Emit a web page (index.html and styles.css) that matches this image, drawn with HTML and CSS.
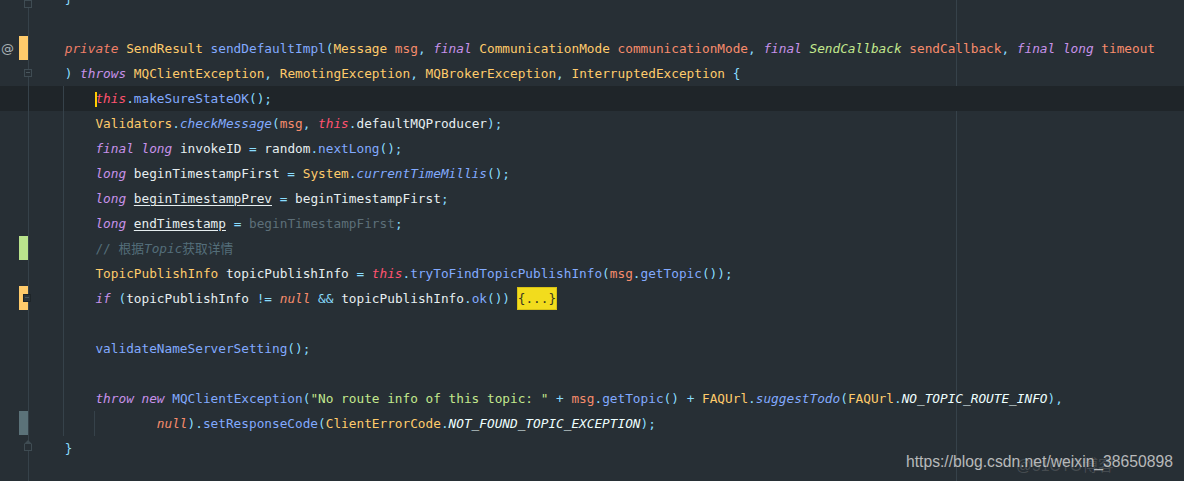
FILE: index.html
```html
<!DOCTYPE html>
<html>
<head>
<meta charset="utf-8">
<link rel="stylesheet" href="styles.css">
</head>
<body>
<div class="editor">
  <div class="line"><div class="gut"><span class="ico"></span><span class="mark"></span><span class="fold"></span></div><div class="code">    <span class="o">}</span></div></div>
  <div class="line"><div class="gut"><span class="ico"></span><span class="mark"></span></div><div class="code"></div></div>
  <div class="line"><div class="gut"><span class="ico">@</span><span class="mark yel"></span></div><div class="code">    <span class="pr">private</span> <span class="c">SendResult</span> <span class="m">sendDefaultImpl</span><span class="o">(</span><span class="c">Message</span> <span class="p">msg</span><span class="o">,</span> <span class="k">final</span> <span class="c">CommunicationMode</span> <span class="p">communicationMode</span><span class="o">,</span> <span class="k">final</span> <span class="sc">SendCallback</span> <span class="p">sendCallback</span><span class="o">,</span> <span class="k">final</span> <span class="k">long</span> <span class="p">timeout</span></div></div>
  <div class="line"><div class="gut"><span class="ico"></span><span class="mark"></span><span class="fold minus"></span></div><div class="code">    <span class="o">)</span> <span class="k">throws</span> <span class="c">MQClientException</span><span class="o">,</span> <span class="c">RemotingException</span><span class="o">,</span> <span class="c">MQBrokerException</span><span class="o">,</span> <span class="c">InterruptedException</span> <span class="o">{</span></div></div>
  <div class="line cur g1"><div class="gut"><span class="ico"></span><span class="mark"></span></div><div class="code">        <span class="caret"></span><span class="t">this</span><span class="o">.</span><span class="m">makeSureStateOK</span><span class="o">();</span></div></div>
  <div class="line g1"><div class="gut"><span class="ico"></span><span class="mark"></span></div><div class="code">        <span class="c">Validators</span><span class="o">.</span><span class="mi">checkMessage</span><span class="o">(</span><span class="p">msg</span><span class="o">,</span> <span class="t">this</span><span class="o">.</span>defaultMQProducer<span class="o">);</span></div></div>
  <div class="line g1"><div class="gut"><span class="ico"></span><span class="mark"></span></div><div class="code">        <span class="k">final</span> <span class="k">long</span> invokeID <span class="o">=</span> random<span class="o">.</span><span class="m">nextLong</span><span class="o">();</span></div></div>
  <div class="line g1"><div class="gut"><span class="ico"></span><span class="mark"></span></div><div class="code">        <span class="k">long</span> beginTimestampFirst <span class="o">=</span> <span class="c">System</span><span class="o">.</span><span class="mi">currentTimeMillis</span><span class="o">();</span></div></div>
  <div class="line g1"><div class="gut"><span class="ico"></span><span class="mark"></span></div><div class="code">        <span class="k">long</span> <span class="u">beginTimestampPrev</span> <span class="o">=</span> beginTimestampFirst<span class="o">;</span></div></div>
  <div class="line g1"><div class="gut"><span class="ico"></span><span class="mark"></span></div><div class="code">        <span class="k">long</span> <span class="u">endTimestamp</span> <span class="o">=</span> <span class="gr">beginTimestampFirst</span><span class="o">;</span></div></div>
  <div class="line g1"><div class="gut"><span class="ico"></span><span class="mark grn"></span></div><div class="code">        <span class="cm">// 根据<i>Topic</i>获取详情</span></div></div>
  <div class="line g1"><div class="gut"><span class="ico"></span><span class="mark"></span></div><div class="code">        <span class="c">TopicPublishInfo</span> topicPublishInfo <span class="o">=</span> <span class="t">this</span><span class="o">.</span><span class="m">tryToFindTopicPublishInfo</span><span class="o">(</span><span class="p">msg</span><span class="o">.</span><span class="m">getTopic</span><span class="o">());</span></div></div>
  <div class="line g1"><div class="gut"><span class="ico"></span><span class="mark yel"></span><span class="fold plus"></span></div><div class="code">        <span class="k">if</span> <span class="o">(</span>topicPublishInfo <span class="o">!=</span> <span class="n">null</span> <span class="o">&amp;&amp;</span> topicPublishInfo<span class="o">.</span><span class="m">ok</span><span class="o">())</span> <span class="folded">{...}</span></div></div>
  <div class="line g1"><div class="gut"><span class="ico"></span><span class="mark"></span></div><div class="code"></div></div>
  <div class="line g1"><div class="gut"><span class="ico"></span><span class="mark"></span></div><div class="code">        <span class="m">validateNameServerSetting</span><span class="o">();</span></div></div>
  <div class="line g1"><div class="gut"><span class="ico"></span><span class="mark"></span></div><div class="code"></div></div>
  <div class="line g1"><div class="gut"><span class="ico"></span><span class="mark"></span></div><div class="code">        <span class="k">throw</span> <span class="k">new</span> <span class="m">MQClientException</span><span class="o">(</span><span class="s">"No route info of this topic: "</span> <span class="o">+</span> <span class="p">msg</span><span class="o">.</span><span class="m">getTopic</span><span class="o">()</span> <span class="o">+</span> <span class="c">FAQUrl</span><span class="o">.</span><span class="mi">suggestTodo</span><span class="o">(</span><span class="c">FAQUrl</span><span class="o">.</span><span class="st">NO_TOPIC_ROUTE_INFO</span><span class="o">),</span></div></div>
  <div class="line g1 g2"><div class="gut"><span class="ico"></span><span class="mark gry"></span></div><div class="code">                <span class="n">null</span><span class="o">).</span><span class="m">setResponseCode</span><span class="o">(</span><span class="c">ClientErrorCode</span><span class="o">.</span><span class="st">NOT_FOUND_TOPIC_EXCEPTION</span><span class="o">);</span></div></div>
  <div class="line"><div class="gut"><span class="ico"></span><span class="mark"></span><span class="fold end"></span></div><div class="code">    <span class="o">}</span></div></div>
  <div class="line"><div class="gut"><span class="ico"></span><span class="mark"></span></div><div class="code"></div></div>
</div>
<div class="wm"><span class="wm2">@51CTO博客</span>https://blog.csdn.net/weixin_38650898</div>
</body>
</html>
```

FILE: styles.css
```css
html, body {
  margin: 0;
  padding: 0;
  background: #272f35;
  width: 1184px;
  height: 481px;
  overflow: hidden;
}
.editor {
  margin-top: -14px;
  display: flex;
  flex-direction: column;
  font-family: "DejaVu Sans Mono", "Liberation Mono", "Noto Sans CJK SC", monospace;
  font-size: 12.75px;
  color: #e6eef0;
  background-image: linear-gradient(#36424a, #36424a);
  background-repeat: no-repeat;
  background-position: 956px 0;
  background-size: 1px 100%;
}
.line {
  display: flex;
  height: 25px;
  line-height: 25px;
}
.line.cur {
  background-color: #1f2529;
}
.gut {
  position: relative;
  width: 34px;
  flex: none;
  display: flex;
  align-items: stretch;
  background-image: linear-gradient(#36424a, #36424a);
  background-repeat: no-repeat;
  background-position: 28px 0;
  background-size: 1px 100%;
}
.ico {
  width: 19px;
  flex: none;
  color: #a9b2b6;
  font-family: "DejaVu Sans", sans-serif;
  font-size: 13px;
  text-align: left;
  padding-left: 1px;
  box-sizing: border-box;
}
.mark {
  width: 9px;
  flex: none;
  margin: 0 0 1px 0;
}
.mark.yel { background: #ffcb6b; }
.mark.grn { background: #b9e38c; }
.mark.gry { background: #5b7279; }
.fold {
  position: absolute;
  left: 24px;
  width: 8px;
  height: 8px;
  border: 1px solid #3f4c53;
  background: #272f35;
  box-sizing: border-box;
}
.fold.minus { top: 8px; }
.fold.minus::after, .fold.plus::after {
  content: "";
  position: absolute;
  left: 1px;
  right: 1px;
  top: 2px;
  height: 1px;
  background: #4a575e;
}
.fold.plus { top: 8px; left: 23px; background: #2b353b; border-color: #1e2529; }
.fold.end { top: 8px; border-top: none; height: 7px; }
.fold.end::before {
  content: "";
  position: absolute;
  left: -1px;
  top: -4px;
  width: 0;
  height: 0;
  border-left: 4px solid transparent;
  border-right: 4px solid transparent;
  border-bottom: 4px solid #3f4c53;
}
.line:first-child .fold { top: 14px; }
.code {
  flex: 1;
  white-space: pre;
}
.g1 .code {
  background-image: linear-gradient(#36424a, #36424a);
  background-repeat: no-repeat;
  background-position: 29px 0;
  background-size: 1px 100%;
}
.g1.g2 .code {
  background-image: linear-gradient(#36424a, #36424a), linear-gradient(#36424a, #36424a);
  background-position: 29px 0, 60px 0;
  background-size: 1px 100%, 1px 100%;
}
.k { color: #c792ea; font-style: italic; }
.pr { color: #f07f68; font-style: italic; }
.t { color: #ff5370; font-style: italic; }
.c { color: #ffcb6b; }
.m { color: #82aaff; }
.mi { color: #82aaff; font-style: italic; }
.p { color: #f78c6c; }
.o { color: #89ddff; }
.gr { color: #5d6f79; }
.cm { color: #546e7a; }
.cm i { font-style: italic; }
.s { color: #c3e88d; }
.sc { color: #c3e88d; font-style: italic; }
.n { color: #f78c6c; font-style: italic; }
.st { color: #eeffff; font-style: italic; }
.u { text-decoration: underline; text-underline-offset: 2px; }
.caret {
  display: inline-block;
  width: 0;
  height: 15px;
  border-left: 2px solid #ffcc00;
  margin-right: -2px;
  vertical-align: middle;
}
.folded {
  background: #f2dc1d;
  color: #3b3a20;
  box-shadow: 0 0 0 1px #d8c215;
  padding: 3px 0;
}
.wm {
  position: absolute;
  left: 906px;
  top: 453px;
  font-family: "Liberation Sans", Arial, sans-serif;
  font-size: 15.7px;
  color: rgba(225, 225, 225, 0.78);
  white-space: nowrap;
}
.wm2 {
  position: absolute;
  left: 110px;
  top: 0;
  color: rgba(200, 200, 200, 0.2);
  font-family: "Liberation Sans", "Noto Sans CJK SC", sans-serif;
}
```
